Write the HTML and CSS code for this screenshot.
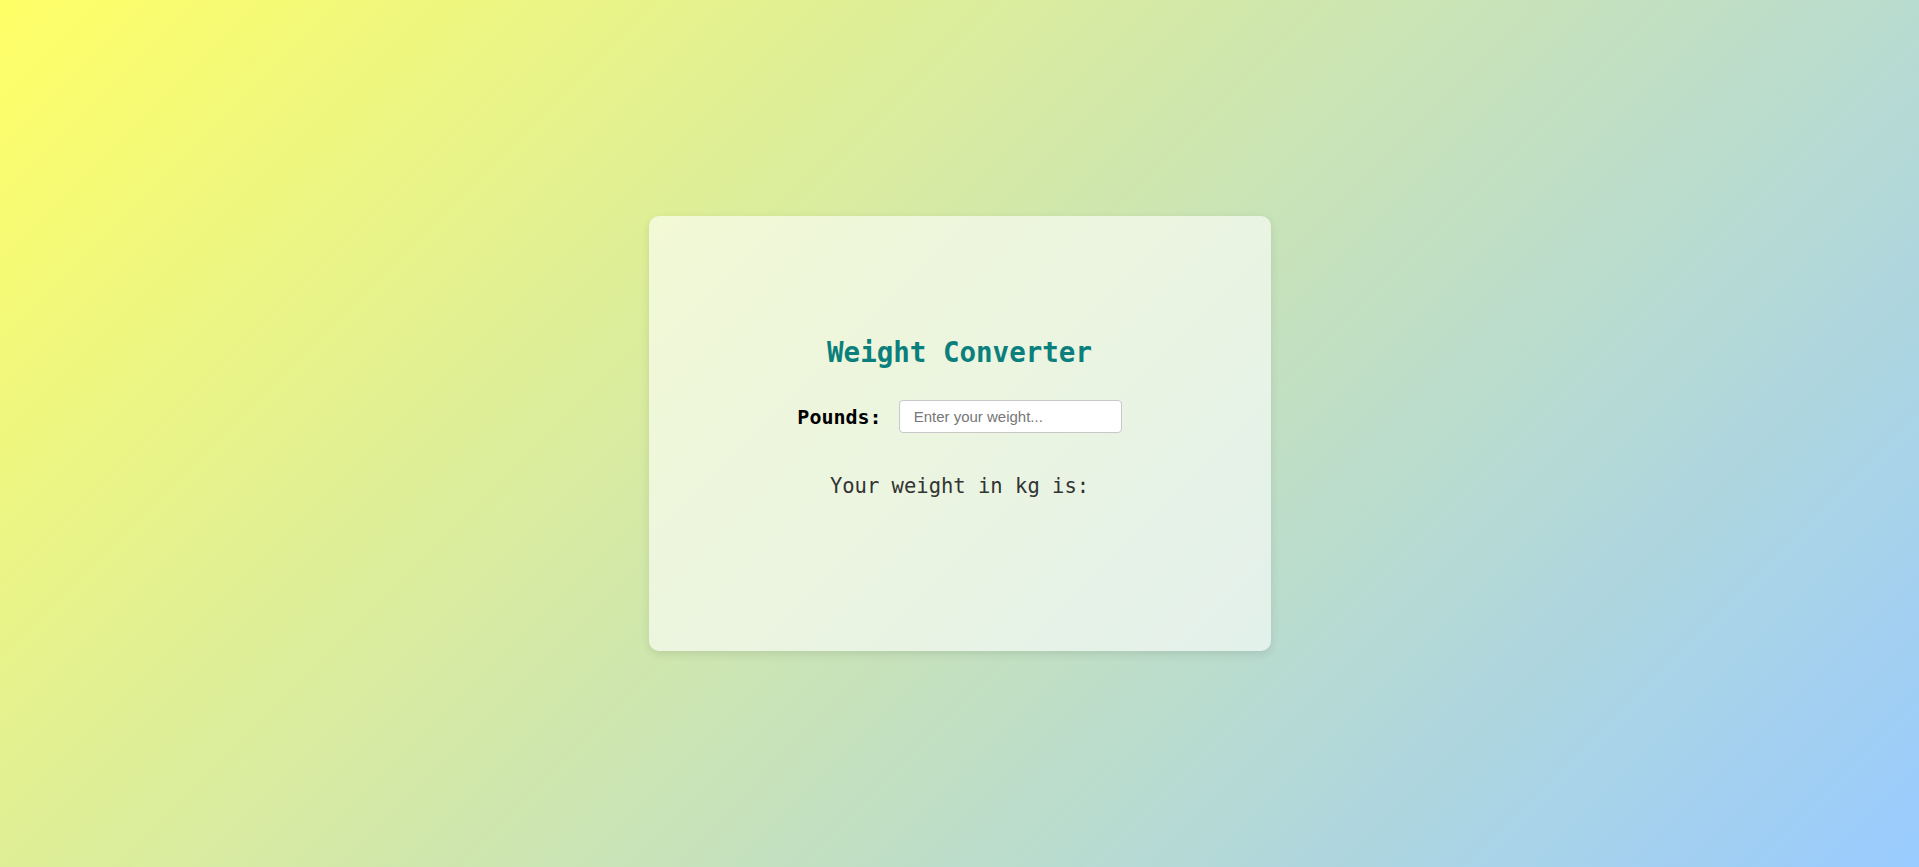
FILE: index.html
```html
<!DOCTYPE html>
<html lang="en">
<head>
<meta charset="UTF-8">
<title>Weight Converter</title>
<link rel="stylesheet" href="styles.css">
</head>
<body>
  <main class="card">
    <h1 class="title">Weight Converter</h1>
    <div class="row">
      <label class="label" for="pounds">Pounds:</label>
      <input class="input" id="pounds" type="text" placeholder="Enter your weight...">
    </div>
    <p class="result">Your weight in kg is:</p>
  </main>
</body>
</html>
```
FILE: styles.css
```css
html, body {
  margin: 0;
  padding: 0;
  height: 100%;
}
body {
  min-height: 100vh;
  display: flex;
  align-items: center;
  justify-content: center;
  background: linear-gradient(135deg, #ffff66, #99cbff);
  font-family: "DejaVu Sans Mono", "Liberation Mono", monospace;
}
.card {
  box-sizing: border-box;
  width: 622px;
  height: 435px;
  padding-top: 120px;
  border-radius: 10px;
  background: rgba(255, 255, 255, 0.6);
  box-shadow: 0 3px 10px rgba(0, 0, 0, 0.1);
  display: flex;
  flex-direction: column;
  align-items: center;
}
.title {
  margin: 0;
  font-size: 27.5px;
  line-height: 32px;
  font-weight: bold;
  color: #0a7f7c;
}
.row {
  margin-top: 32px;
  display: flex;
  align-items: center;
  gap: 17px;
}
.label {
  font-size: 20px;
  font-weight: bold;
  color: #000;
}
.input {
  box-sizing: border-box;
  width: 223px;
  height: 33px;
  padding: 0 14px;
  border: 1px solid #c8c8c8;
  border-radius: 4px;
  background: #fff;
  font-family: "Liberation Sans", Arial, sans-serif;
  font-size: 15px;
  outline: none;
}
.input::placeholder {
  color: #777;
}
.result {
  margin: 41px 0 0;
  font-size: 20.5px;
  line-height: 24px;
  color: #333;
}
```
